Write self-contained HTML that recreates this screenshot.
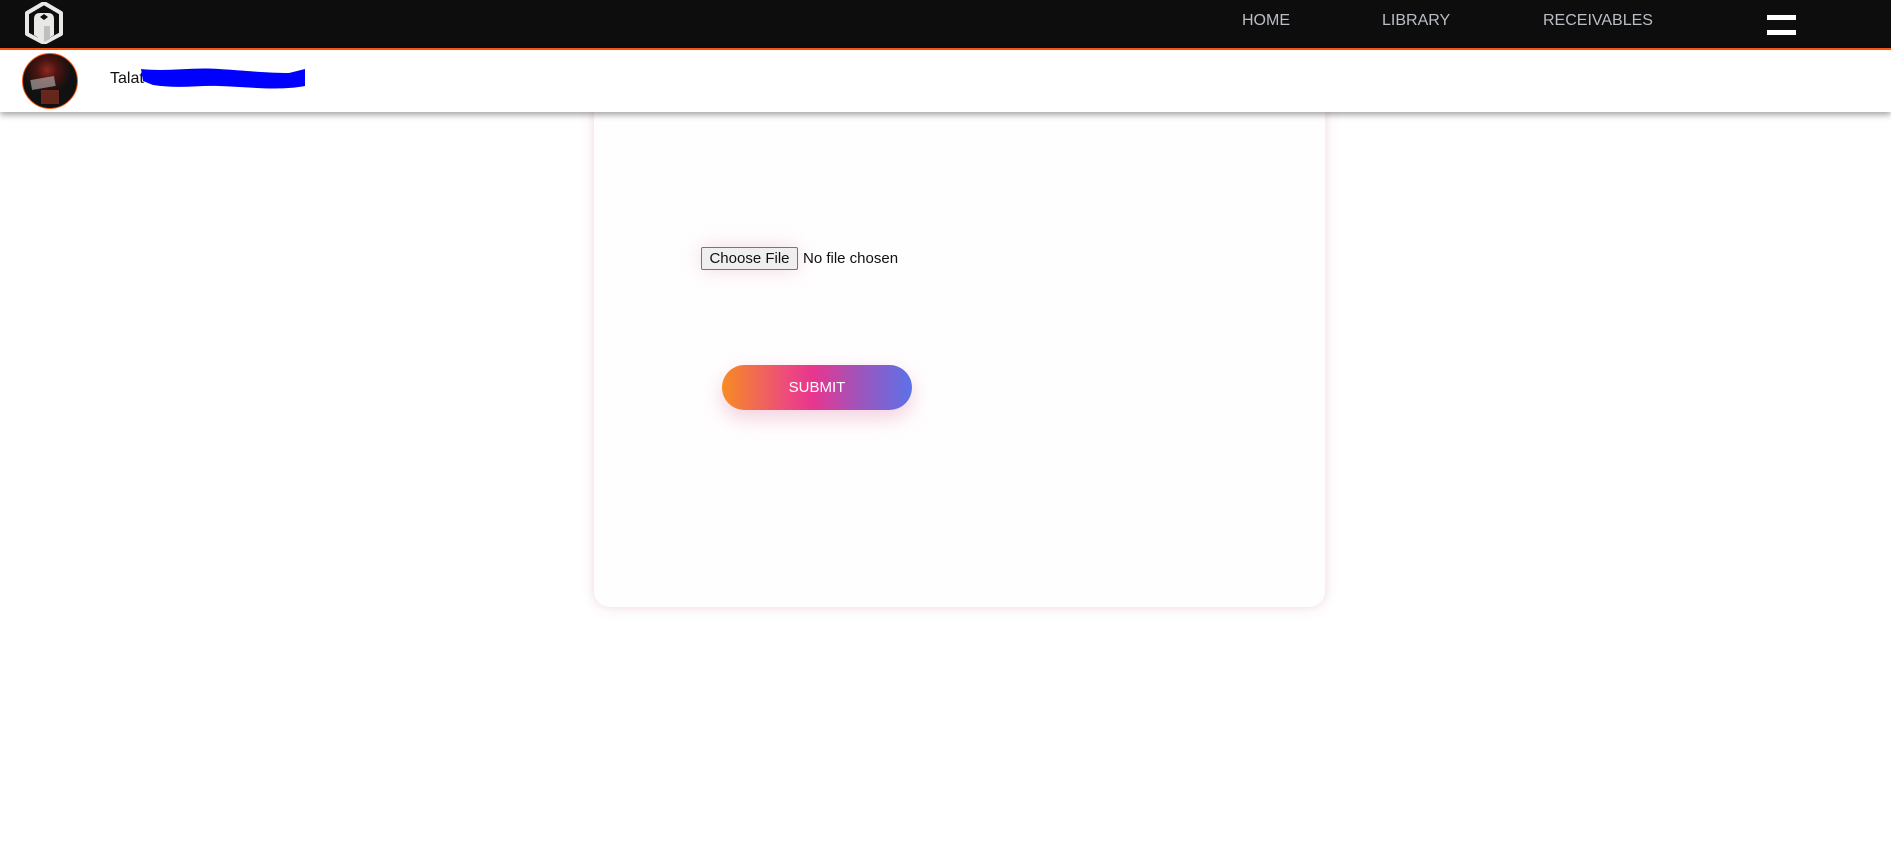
<!DOCTYPE html>
<html><head><meta charset="utf-8"><style>
html,body{margin:0;padding:0;width:1891px;height:851px;background:#fff;overflow:hidden;font-family:"Liberation Sans",sans-serif}
.top{position:absolute;left:0;top:0;width:1891px;height:48px;background:#0d0d0d;border-bottom:2px solid #ff5a12}
.nav{position:absolute;top:12px;color:#b9bdc6;font-size:16px;letter-spacing:0px}
.bar2{position:absolute;left:0;top:50px;width:1891px;height:62px;background:#fff;box-shadow:0 3px 6px rgba(0,0,0,.35);z-index:3}
.card{position:absolute;left:594px;top:60px;width:731px;height:547px;background:#fffefe;border-radius:16px;box-shadow:0 0 12px rgba(200,120,150,.3);z-index:1}
.ham{position:absolute;left:1767px;width:29px;height:5px;background:#fff}
</style></head><body>
<div class="top">
<svg style="position:absolute;left:25px;top:2px" width="38" height="42" viewBox="0 0 38 42">
<path d="M19 1 L36 11 L36 32 L19 41 L2 32 L2 11 Z" fill="none" stroke="#e8e9e6" stroke-width="4" stroke-linejoin="round"/>
<path d="M9 33 L9 17 Q9 11 15 11 L23 11 Q29 11 29 17 L29 33 L24 36 L24 24 L14 24 L14 36 Z" fill="#e8e9e6"/>
<path d="M19 12 L23 15 L19 18 L15 15 Z" fill="#0d0d0d"/>
<path d="M13 24 L19 21 L25 24 L25 37 L19 40 L13 37 Z" fill="#e8e9e6"/>
<path d="M19 24 L25 24 L25 37 L19 40 Z" fill="#bfc0bd"/>
</svg>
<div class="nav" style="left:1242px">HOME</div>
<div class="nav" style="left:1382px">LIBRARY</div>
<div class="nav" style="left:1543px">RECEIVABLES</div>
<div class="ham" style="top:15px"></div>
<div class="ham" style="top:30px"></div>
</div>
<div class="bar2">
<div style="position:absolute;left:22px;top:3px;width:54px;height:54px;border-radius:50%;border:1px solid #ff5a12;background:radial-gradient(circle at 45% 30%,#8a2a22 0,#4a1410 22%,#111 50%);overflow:hidden">
<div style="position:absolute;left:8px;top:24px;width:24px;height:10px;background:#bbb;opacity:.6;transform:rotate(-10deg)"></div>
<div style="position:absolute;left:18px;top:36px;width:18px;height:14px;background:#8a3020;opacity:.7"></div>
</div>
<div style="position:absolute;left:110px;top:20px;font-size:16px;color:#111">Talat</div>
<svg style="position:absolute;left:139px;top:17px" width="168" height="26" viewBox="0 0 168 26">
<path d="M2 2 C30 5 50 0 80 2 C110 4 130 6 150 6 L166 2 L166 19 C140 24 110 20 80 19 C60 18 40 22 14 18 L4 14 Z" fill="#0000ff"/>
</svg>
</div>
<div class="card">
<div style="position:absolute;left:107px;top:187px;width:95px;height:21px;border:1px solid #767676;border-radius:2px;background:#efefef;font-size:15px;line-height:21px;text-align:center;color:#111;box-shadow:0 0 20px rgba(220,150,170,.35)">Choose File</div>
<div style="position:absolute;left:209px;top:187px;font-size:15px;line-height:23px;color:#111">No file chosen</div>
<div style="position:absolute;left:128px;top:305px;width:190px;height:45px;border-radius:23px;background:linear-gradient(90deg,#f68b24 0%,#ec4a7e 35%,#e8358f 48%,#a552b8 70%,#5b72e8 100%);color:#fff;font-size:15px;line-height:45px;text-align:center;box-shadow:0 8px 20px rgba(220,120,160,.35)">SUBMIT</div>
</div>
</body></html>
